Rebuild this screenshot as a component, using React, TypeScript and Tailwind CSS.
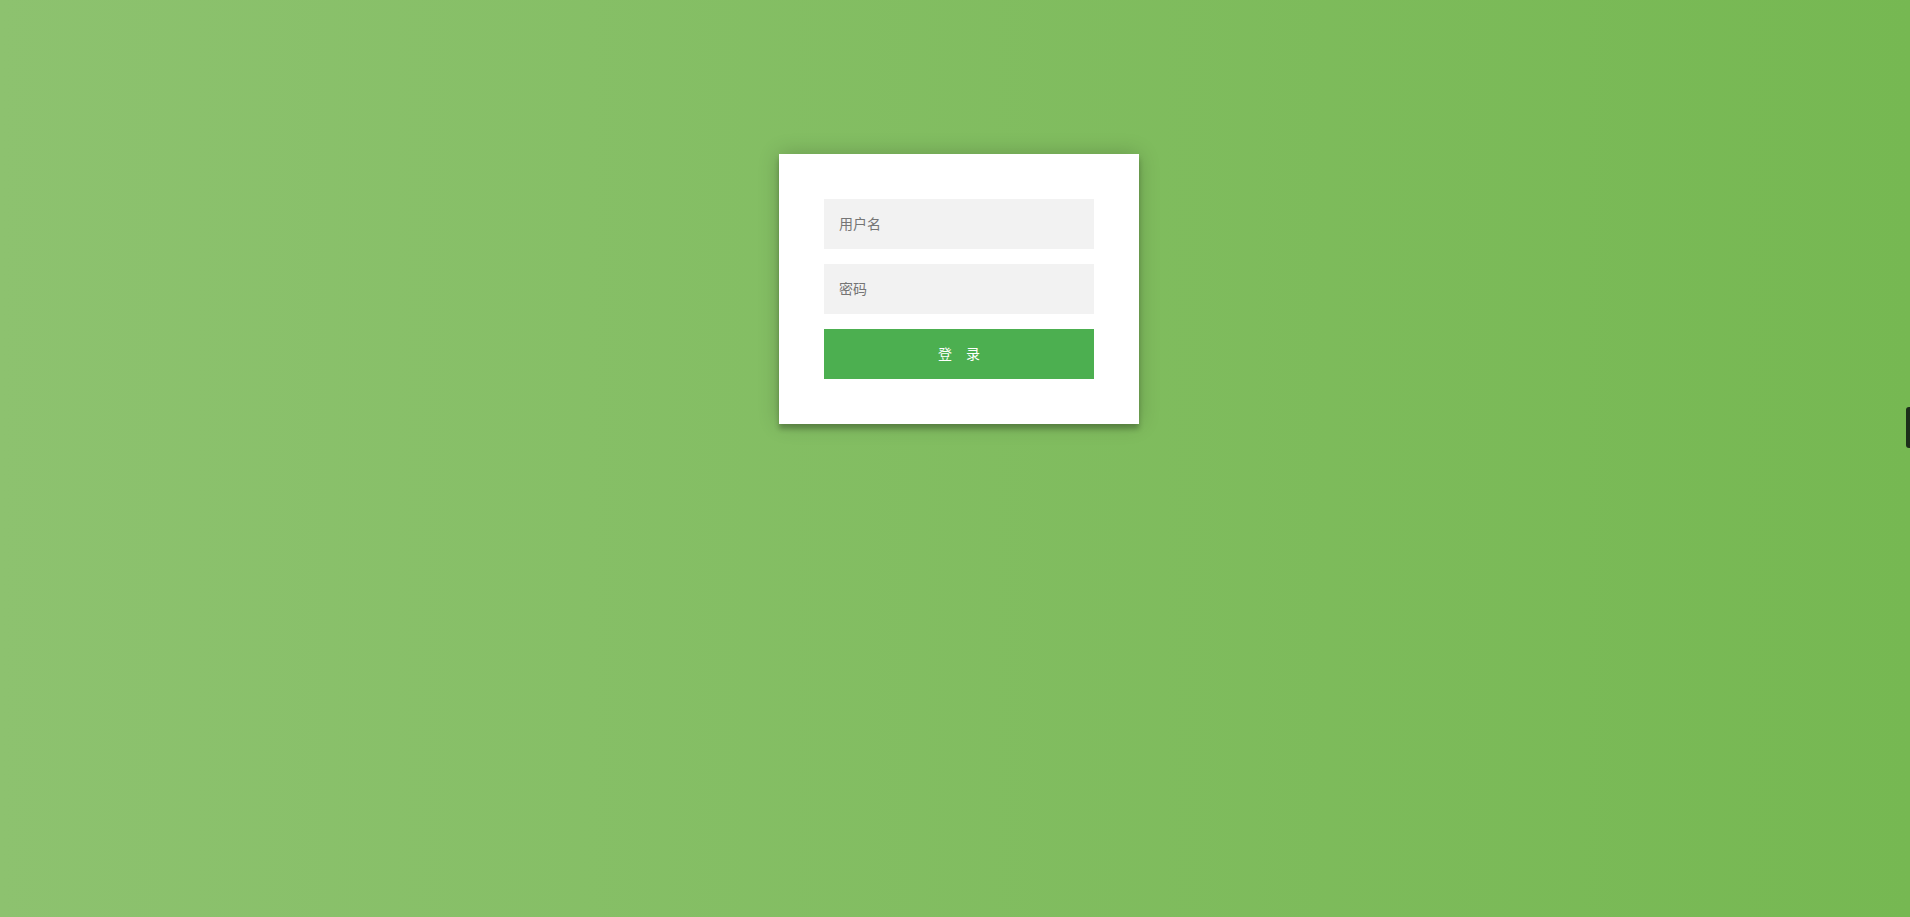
export default function App() {
  return (
    <div className="relative min-h-[917px] w-full bg-[linear-gradient(to_left,#76b852,#8dc26f)] font-['Roboto','Noto_Sans_CJK_SC',sans-serif]">
      <div className="pt-[154px] pl-[8px]">
        <div className="mx-auto w-[360px] bg-white p-[45px] shadow-[0_0_20px_0_rgba(0,0,0,0.2),0_5px_5px_0_rgba(0,0,0,0.24)]">
          <form className="flex flex-col gap-[15px]" onSubmit={(e) => e.preventDefault()}>
            <input
              type="text"
              placeholder="用户名"
              className="h-[50px] w-full bg-[#f2f2f2] px-[15px] text-[14px] text-[#333] outline-none placeholder:text-[#757575]"
            />
            <input
              type="password"
              placeholder="密码"
              className="h-[50px] w-full bg-[#f2f2f2] px-[15px] text-[14px] text-[#333] outline-none placeholder:text-[#757575]"
            />
            <button
              type="submit"
              className="h-[50px] w-full bg-[#4caf50] text-[14px] uppercase text-white"
            >
              登　录
            </button>
          </form>
        </div>
      </div>

      {/* side tab at the right edge */}
      <div className="absolute right-0 top-[407px] h-[41px] w-[4px] rounded-l-[3px] bg-[#1c2e1a]" />
    </div>
  );
}
